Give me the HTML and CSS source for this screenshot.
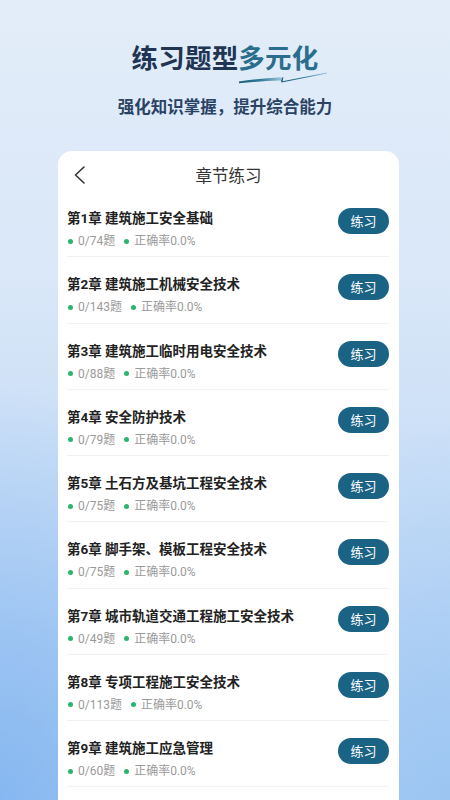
FILE: index.html
```html
<!DOCTYPE html>
<html lang="zh-CN">
<head>
<meta charset="utf-8">
<title>章节练习</title>
<link rel="stylesheet" href="styles.css">
</head>
<body>
<div class="page">
  <header class="hero">
    <div class="hero-title">
      <h1><span class="dark">练习题型</span><span class="teal">多元化</span></h1>
      <svg class="swoosh" width="96" height="16" viewBox="0 0 96 16">
        <defs>
          <linearGradient id="sw" x1="0" y1="0" x2="1" y2="0">
            <stop offset="0" stop-color="#1c5c78"/>
            <stop offset="0.5" stop-color="#2f7a98"/>
            <stop offset="1" stop-color="#9cc6dc"/>
          </linearGradient>
        </defs>
        <path d="M2 12.5 Q20 9.5 45 8.3 L44 11.6 Q20 12.4 2 14.2 Z" fill="url(#sw)"/>
        <path d="M44 11.6 L45.5 8.3 L46.5 8.6 L45.5 12.2 L90 3.6 L90 4.4 L44.5 13.6 Z" fill="url(#sw)"/>
      </svg>
    </div>
    <p class="subtitle">强化知识掌握，提升综合能力</p>
  </header>

  <section class="card">
    <div class="card-head">
      <svg class="back" width="14" height="20" viewBox="0 0 14 20"><path d="M11 2 L2.5 10 L11 18" fill="none" stroke="#333" stroke-width="1.6" stroke-linecap="round" stroke-linejoin="round"/></svg>
      <span class="card-title">章节练习</span>
    </div>
    <ul class="list">
      <li class="row"><div class="info"><div class="name">第1章 建筑施工安全基础</div><div class="stats"><span class="stat"><i class="dot"></i>0/74题</span><span class="stat"><i class="dot"></i>正确率0.0%</span></div></div><span class="btn">练习</span></li>
      <li class="row"><div class="info"><div class="name">第2章 建筑施工机械安全技术</div><div class="stats"><span class="stat"><i class="dot"></i>0/143题</span><span class="stat"><i class="dot"></i>正确率0.0%</span></div></div><span class="btn">练习</span></li>
      <li class="row"><div class="info"><div class="name">第3章 建筑施工临时用电安全技术</div><div class="stats"><span class="stat"><i class="dot"></i>0/88题</span><span class="stat"><i class="dot"></i>正确率0.0%</span></div></div><span class="btn">练习</span></li>
      <li class="row"><div class="info"><div class="name">第4章 安全防护技术</div><div class="stats"><span class="stat"><i class="dot"></i>0/79题</span><span class="stat"><i class="dot"></i>正确率0.0%</span></div></div><span class="btn">练习</span></li>
      <li class="row"><div class="info"><div class="name">第5章 土石方及基坑工程安全技术</div><div class="stats"><span class="stat"><i class="dot"></i>0/75题</span><span class="stat"><i class="dot"></i>正确率0.0%</span></div></div><span class="btn">练习</span></li>
      <li class="row"><div class="info"><div class="name">第6章 脚手架、模板工程安全技术</div><div class="stats"><span class="stat"><i class="dot"></i>0/75题</span><span class="stat"><i class="dot"></i>正确率0.0%</span></div></div><span class="btn">练习</span></li>
      <li class="row"><div class="info"><div class="name">第7章 城市轨道交通工程施工安全技术</div><div class="stats"><span class="stat"><i class="dot"></i>0/49题</span><span class="stat"><i class="dot"></i>正确率0.0%</span></div></div><span class="btn">练习</span></li>
      <li class="row"><div class="info"><div class="name">第8章 专项工程施工安全技术</div><div class="stats"><span class="stat"><i class="dot"></i>0/113题</span><span class="stat"><i class="dot"></i>正确率0.0%</span></div></div><span class="btn">练习</span></li>
      <li class="row"><div class="info"><div class="name">第9章 建筑施工应急管理</div><div class="stats"><span class="stat"><i class="dot"></i>0/60题</span><span class="stat"><i class="dot"></i>正确率0.0%</span></div></div><span class="btn">练习</span></li>
    </ul>
  </section>
</div>
</body>
</html>
```

FILE: styles.css
```css
* { box-sizing: border-box; }
html, body { margin: 0; padding: 0; }
body {
  width: 450px;
  height: 800px;
  overflow: hidden;
  font-family: "Noto Sans CJK SC", "Noto Sans", sans-serif;
  background:
    radial-gradient(ellipse 260px 420px at 0% 100%, rgba(128,180,240,0.85), rgba(128,180,240,0) 100%),
    radial-gradient(ellipse 200px 380px at 100% 100%, rgba(150,195,242,0.7), rgba(150,195,242,0) 100%),
    linear-gradient(180deg, #e3edf9 0%, #d9e7f8 35%, #c2daf6 70%, #a9cbf3 100%);
}
.page { width: 450px; }
.hero {
  height: 151px;
  padding-top: 37px;
  text-align: center;
}
.hero-title {
  position: relative;
  display: inline-block;
}
h1 {
  margin: 0;
  font-size: 26.5px;
  line-height: 40px;
  font-weight: 700;
  letter-spacing: 0.2px;
}
.dark { color: #1f3553; }
.teal { color: #2a6d8d; }
.swoosh {
  position: absolute;
  left: 105px;
  top: 32px;
}
.subtitle {
  margin: 17px 0 0;
  font-size: 16.5px;
  line-height: 24px;
  font-weight: 700;
  color: #2a4364;
}
.card {
  margin-left: 58px;
  width: 341px;
  background: #fff;
  border-radius: 14px 14px 0 0;
  min-height: 700px;
}
.card-head {
  position: relative;
  height: 40px;
  padding-top: 8px;
  text-align: center;
}
.back {
  position: absolute;
  left: 15px;
  top: 14px;
}
.card-title {
  display: block;
  font-size: 16.5px;
  line-height: 32px;
  color: #333;
}
.list {
  list-style: none;
  margin: 0;
  padding: 0;
}
.row {
  display: flex;
  justify-content: space-between;
  align-items: flex-start;
  margin: 0 10px 0 9px;
  padding: 17px 0 7px;
  border-bottom: 1px solid #f1f2f4;
  height: 66.25px;
}
.info { display: flex; flex-direction: column; gap: 5px; }
.name {
  font-family: Roboto, "Noto Sans CJK SC", sans-serif;
  font-size: 13.5px;
  line-height: 20px;
  font-weight: 700;
  color: #222;
  white-space: nowrap;
}
.stats {
  display: flex;
  gap: 8px;
  font-family: Roboto, "Noto Sans CJK SC", sans-serif;
  font-size: 12px;
  line-height: 16px;
  color: #9a9a9a;
}
.stat { display: flex; align-items: center; }
.dot {
  width: 5px;
  height: 5px;
  border-radius: 50%;
  background: #2bb46e;
  margin: 0 5px 0 1px;
}
.btn {
  width: 51px;
  height: 26px;
  border-radius: 13px;
  background: #1a6385;
  color: #fff;
  font-size: 13px;
  line-height: 26px;
  text-align: center;
  flex-shrink: 0;
}
```
